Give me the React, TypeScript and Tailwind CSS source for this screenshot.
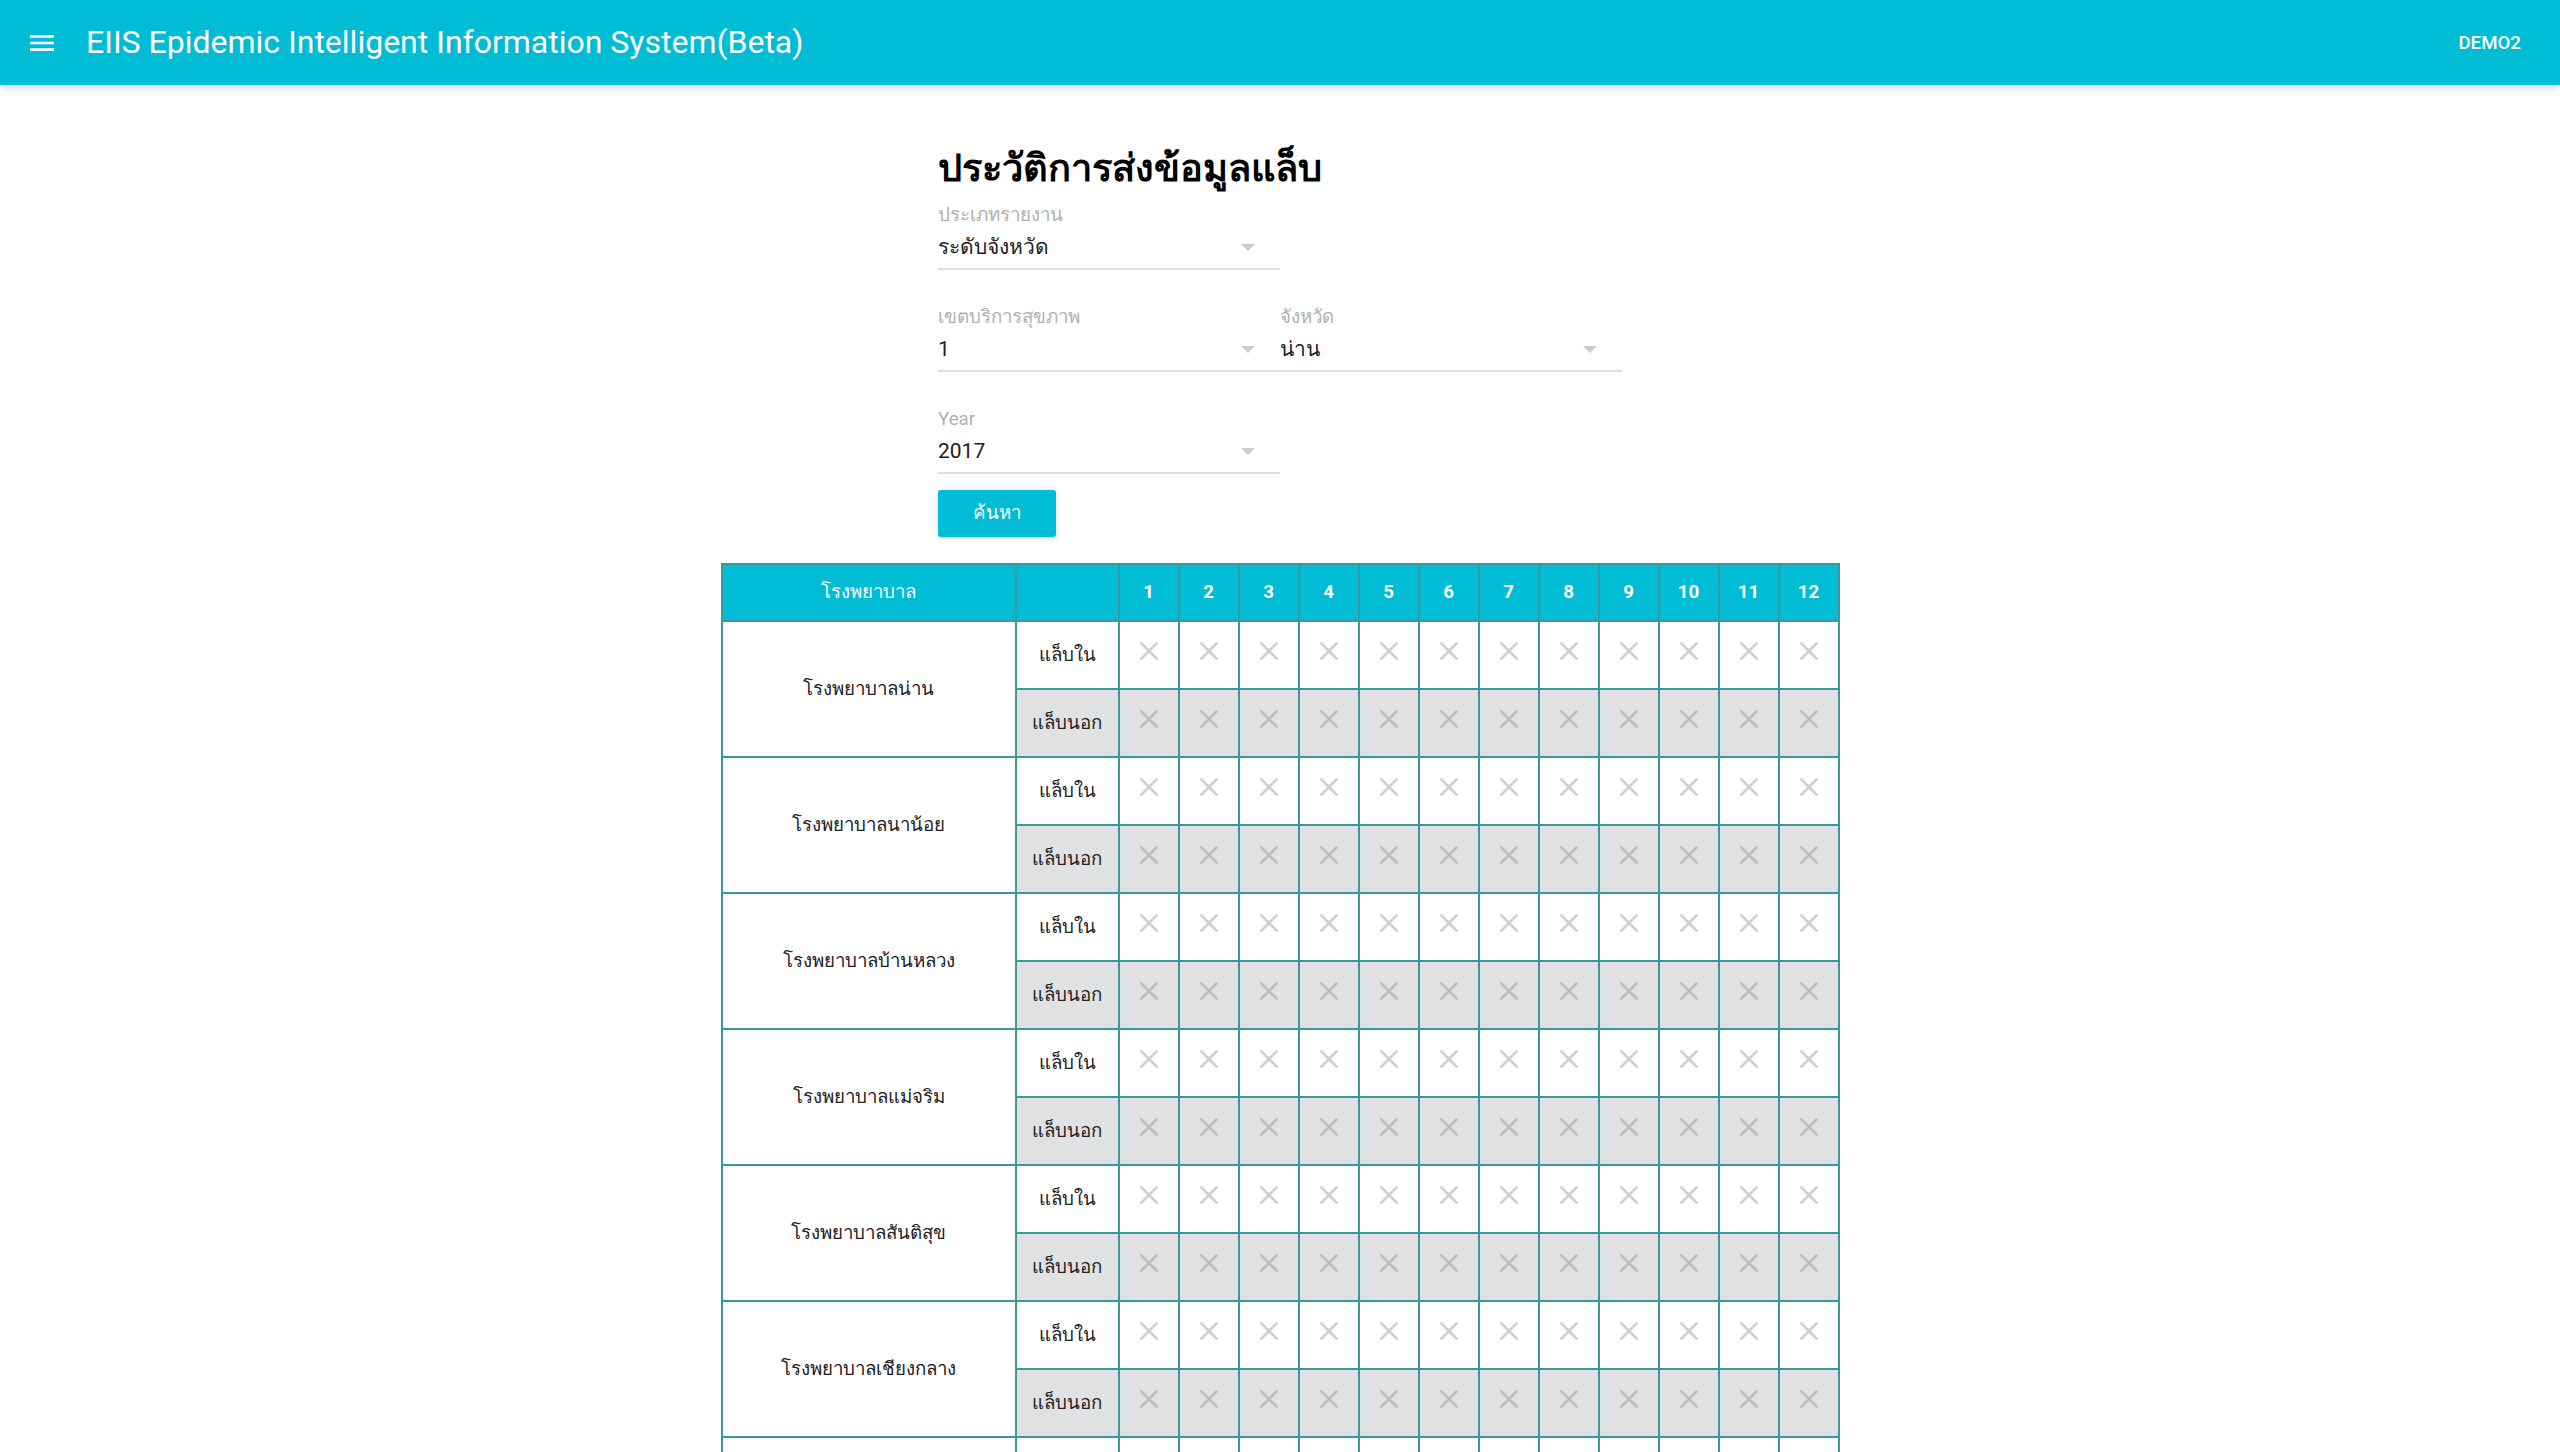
import React from "react";

const hospitals = [
  "โรงพยาบาลน่าน",
  "โรงพยาบาลนาน้อย",
  "โรงพยาบาลบ้านหลวง",
  "โรงพยาบาลแม่จริม",
  "โรงพยาบาลสันติสุข",
  "โรงพยาบาลเชียงกลาง",
  "โรงพยาบาลปัว",
];

const months = [1, 2, 3, 4, 5, 6, 7, 8, 9, 10, 11, 12];

function MenuIcon() {
  return (
    <svg width="32" height="32" viewBox="0 0 24 24" fill="#ffffff">
      <path d="M3 18h18v-2H3v2zm0-5h18v-2H3v2zm0-7v2h18V6H3z" />
    </svg>
  );
}

function CloseIcon({ color }: { color: string }) {
  return (
    <svg width="32" height="32" viewBox="0 0 24 24" fill={color} className="mx-auto">
      <path d="M19 6.41L17.59 5 12 10.59 6.41 5 5 6.41 10.59 12 5 17.59 6.41 19 12 13.41 17.59 19 19 17.59 13.41 12z" />
    </svg>
  );
}

function SelectField({ label, value, className = "" }: { label: string; value: string; className?: string }) {
  return (
    <div className={"flex w-[342px] flex-col border-b-2 border-[#e0e0e0] pb-[5px] " + className}>
      <div className="h-[24px] text-[18.7px] leading-[24px] text-[#b0b0b0]">{label}</div>
      <div className="mt-[4px] flex h-[32px] items-center justify-between">
        <span className="text-[21px] leading-[32px] text-[#212121]">{value}</span>
        {/* dropdown triangle */}
        <span className="mr-[25px] h-0 w-0 border-x-[7px] border-t-[7px] border-x-transparent border-t-[#cbcbcb]" />
      </div>
    </div>
  );
}

export default function App() {
  return (
    <div className="min-h-screen bg-white font-['Roboto',sans-serif]">
      {/* App bar */}
      <header className="relative z-10 flex h-[85px] items-center bg-[#00bcd4] pl-[26px] pr-[39px] shadow-[0_2px_8px_rgba(0,0,0,0.2)]">
        <MenuIcon />
        <h1 className="ml-[28px] text-[32px] font-normal leading-[85px] text-white">
          EIIS Epidemic Intelligent Information System(Beta)
        </h1>
        <span className="ml-auto pt-[2px] text-[18.7px] font-medium text-white">DEMO2</span>
      </header>

      <main className="pb-10">
        <div className="mx-auto w-[684px] pt-[58px]">
          <h2 className="mb-[10px] text-[38px] font-bold leading-[50px] text-black">ประวัติการส่งข้อมูลแล็บ</h2>

          <SelectField label="ประเภทรายงาน" value="ระดับจังหวัด" />

          <div className="mt-[35px] flex">
            <SelectField label="เขตบริการสุขภาพ" value="1" />
            <SelectField label="จังหวัด" value="น่าน" />
          </div>

          <SelectField className="mt-[35px]" label="Year" value="2017" />

          <button className="mt-[16px] h-[47px] w-[118px] rounded-[3px] bg-[#00bcd4] text-[18.7px] text-white shadow-[0_1px_6px_rgba(0,0,0,0.15)]">
            ค้นหา
          </button>
        </div>

        {/* Lab history table */}
        <table className="mx-auto mt-[26px] w-[1117px] table-fixed border-collapse border-2 border-[#3b999c] text-[18.7px]">
          <colgroup>
            <col className="w-[294px]" />
            <col className="w-[103px]" />
            {months.map((m) => (
              <col key={m} className="w-[60px]" />
            ))}
          </colgroup>
          <thead>
            <tr className="h-[57px] bg-[#00bcd4] text-white">
              <th className="border-2 border-[#3b999c] font-normal">โรงพยาบาล</th>
              <th className="border-2 border-[#3b999c]" />
              {months.map((m) => (
                <th key={m} className="border-2 border-[#3b999c] font-bold">
                  {m}
                </th>
              ))}
            </tr>
          </thead>
          <tbody>
            {hospitals.map((h) => (
              <React.Fragment key={h}>
                <tr className="h-[68px] bg-white">
                  <td rowSpan={2} className="border-2 border-[#3b999c] bg-white text-center text-[#212121]">
                    {h}
                  </td>
                  <td className="border-2 border-[#3b999c] text-center font-medium text-[#212121]">แล็บใน</td>
                  {months.map((m) => (
                    <td key={m} className="border-2 border-[#3b999c] pb-[8px]">
                      <CloseIcon color="#d0d0d0" />
                    </td>
                  ))}
                </tr>
                <tr className="h-[68px] bg-[#e0e1e3]">
                  <td className="border-2 border-[#3b999c] text-center font-medium text-[#212121]">แล็บนอก</td>
                  {months.map((m) => (
                    <td key={m} className="border-2 border-[#3b999c] pb-[8px]">
                      <CloseIcon color="#bdbdbd" />
                    </td>
                  ))}
                </tr>
              </React.Fragment>
            ))}
          </tbody>
        </table>
      </main>
    </div>
  );
}
